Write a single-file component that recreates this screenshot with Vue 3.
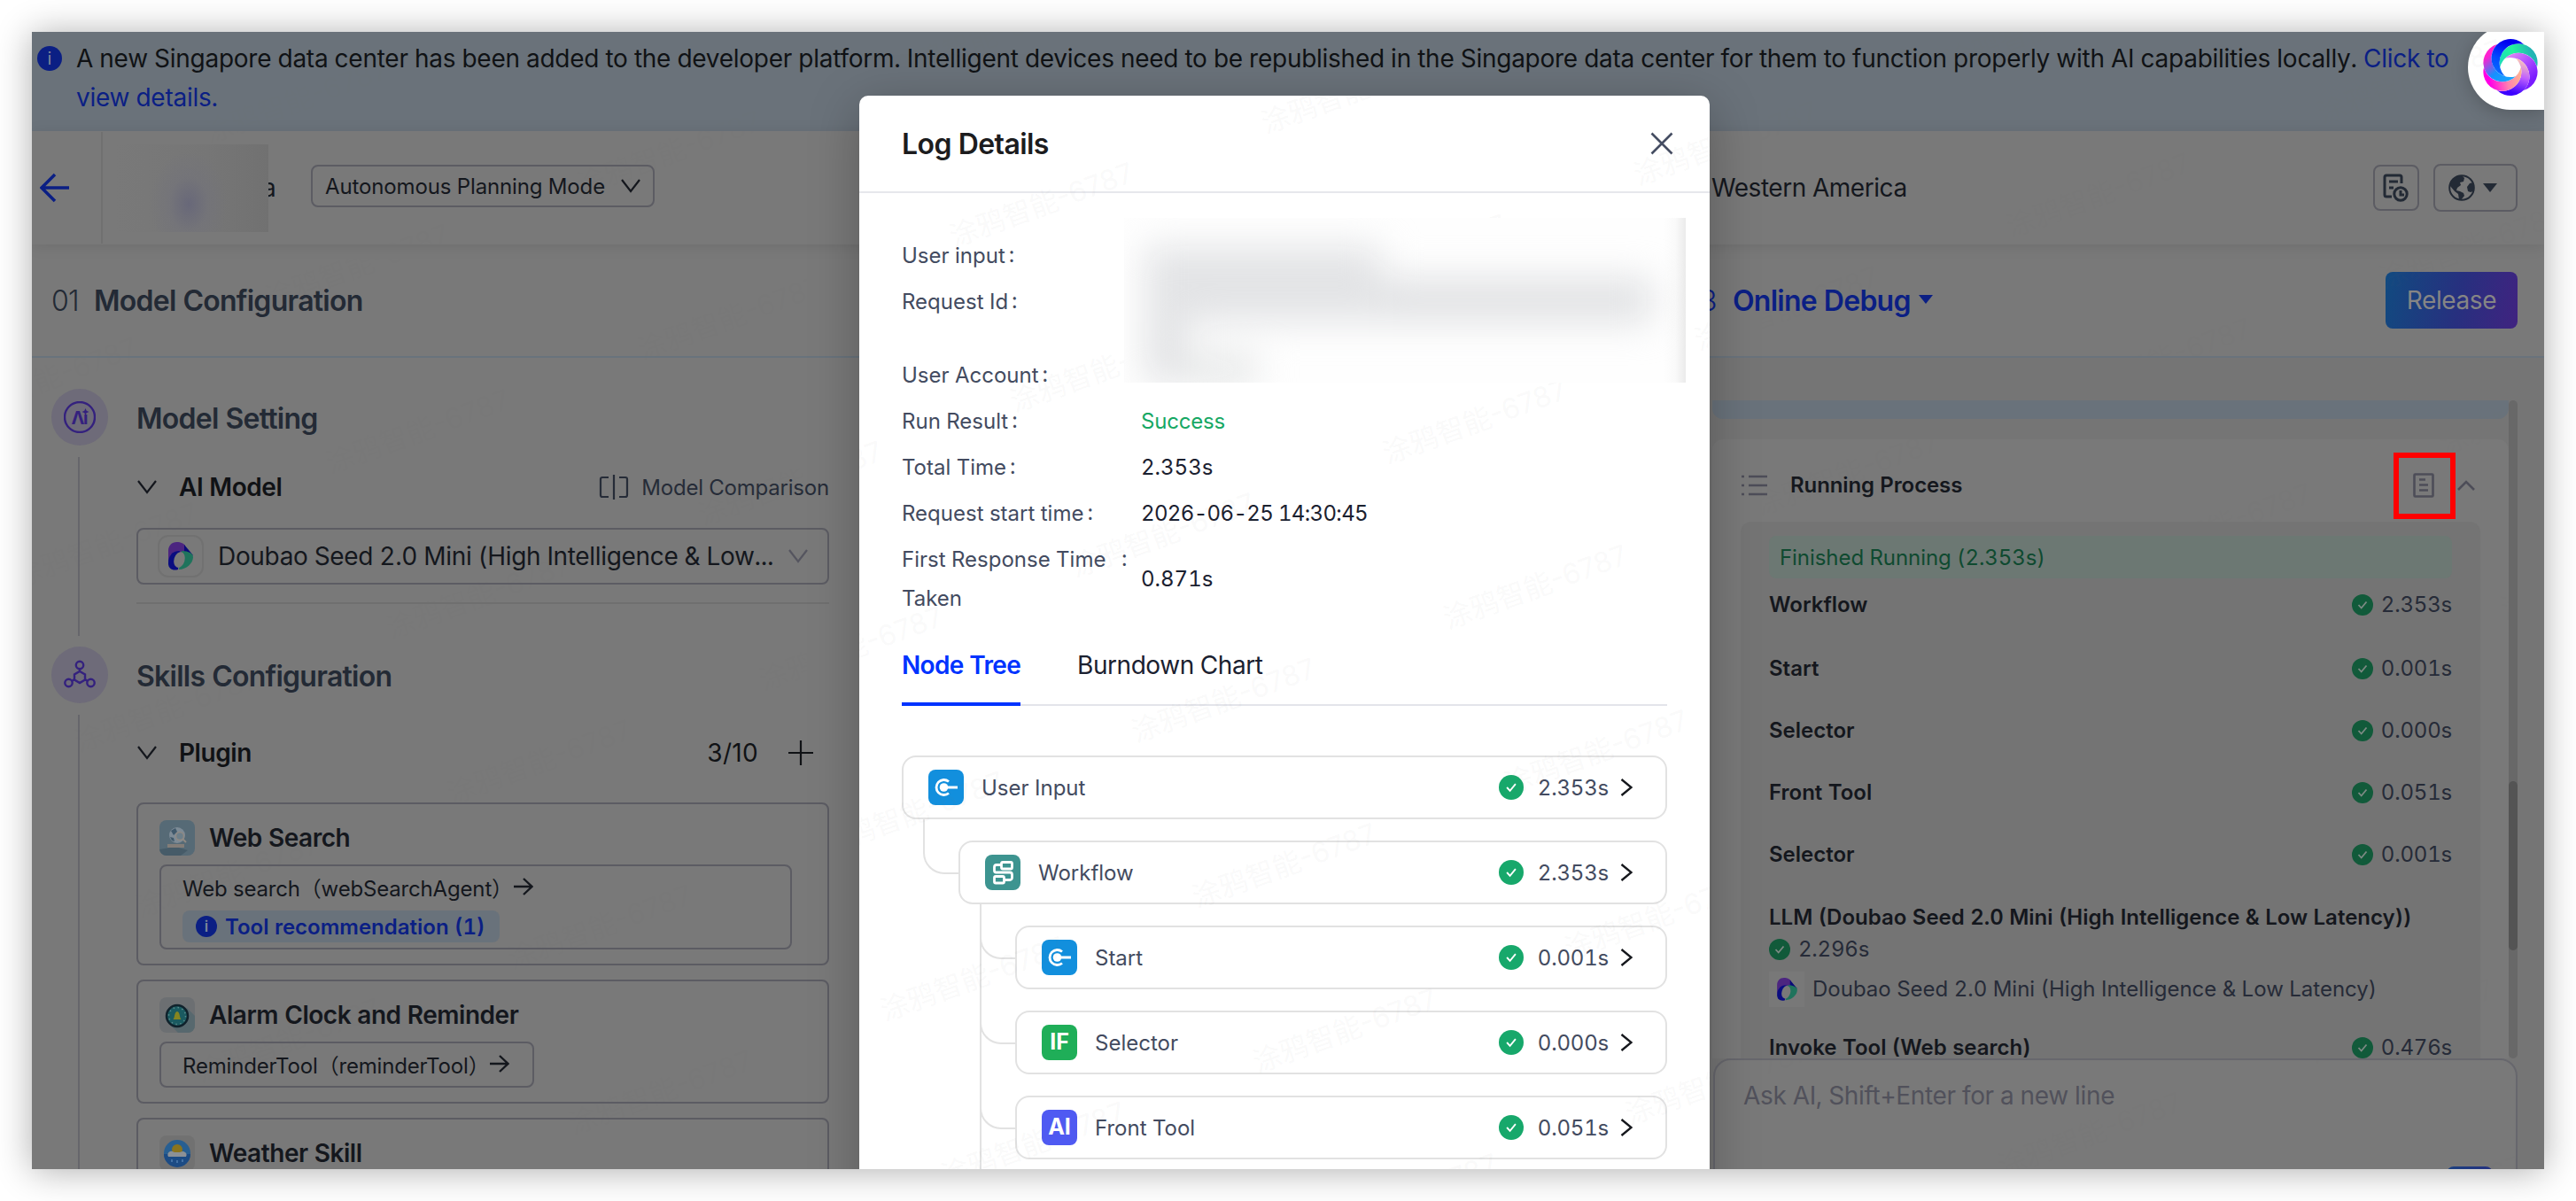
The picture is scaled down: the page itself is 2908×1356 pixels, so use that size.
<template>
  <div class="window">
    <div class="banner">
      <span class="info">i</span>
      <div class="banner-text">
        <p>
          A new Singapore data center has been added to the developer platform. Intelligent devices need to be republished
          in the Singapore data center for them to function properly with AI capabilities locally. <a>Click to</a>
        </p>
        <p><a>view details.</a></p>
      </div>
    </div>

    <header class="header">
      <div class="back">
        <svg width="34" height="34" viewBox="0 0 34 34"><path d="M33 17H3M17 2L2 17l15 15" /></svg>
      </div>
      <div class="agent-name"></div>
      <span class="agent-tail">a</span>
      <div class="mode-select">
        <span>Autonomous Planning Mode</span>
        <svg class="chev" width="22" height="16" viewBox="0 0 22 16"><path d="M1 1l10 13L21 1" /></svg>
      </div>
      <span class="region">Western America</span>
      <div class="tools">
        <div class="tool-btn">
          <svg width="30" height="32" viewBox="0 0 30 32">
            <path d="M10 26H4a2 2 0 0 1-2-2V4a2 2 0 0 1 2-2h15a2 2 0 0 1 2 2v7M7 9h10M7 16h5" />
            <circle cx="20" cy="23" r="7.2" />
            <path d="M20 19v5h4" />
          </svg>
        </div>
        <div class="tool-btn globe">
          <svg width="30" height="30" viewBox="0 0 30 30">
            <circle cx="15" cy="15" r="13.8" />
            <path class="land" d="M2 13C2 6 8 1 16 2l2 2-1 4-4 1 1 3-4 3-1 3 4 1 4 2 1 3-4 5-2-1-1-6-4-3z" />
            <path class="land" d="M28 9l-4 1-3 4 1 5 3 1 3-1 1-5z" />
          </svg>
          <i class="caret"></i>
        </div>
      </div>
    </header>

    <div class="steps">
      <div class="step"><em>01</em><b>Model Configuration</b></div>
      <div class="step active">
        <em>03</em><b>Online Debug</b><i class="caret"></i>
        <button class="release">Release</button>
      </div>
    </div>

    <main class="content">
      <section class="config">
        <div class="group first">
          <div class="rail">
            <div class="badge">
              <svg width="36" height="36" viewBox="0 0 36 36">
                <circle cx="18" cy="18" r="17" />
                <text x="8.5" y="26" font-size="20" textLength="19">Λı</text>
                <path class="fill" d="M24.5 8l1.2 2.8 2.8 1.2-2.8 1.2-1.2 2.8-1.2-2.8-2.8-1.2 2.8-1.2z" />
              </svg>
            </div>
            <i class="line"></i>
          </div>
          <div class="group-body">
            <h2>Model Setting</h2>
            <div class="row-title model-row">
              <svg class="chev" width="22" height="16" viewBox="0 0 22 16"><path d="M1 1l10 13L21 1" /></svg>
              <b>AI Model</b>
              <span class="compare">
                <svg width="34" height="30" viewBox="0 0 34 30">
                  <path d="M11 4H4a2 2 0 0 0-2 2v18a2 2 0 0 0 2 2h7M17 1v28M23 4h7a2 2 0 0 1 2 2v18a2 2 0 0 1-2 2h-7" />
                </svg>
                Model Comparison
              </span>
            </div>
            <div class="model-select">
              <span class="logo-box">
                <svg width="28" height="32" viewBox="0 0 28 32">
                  <path d="M0 24V10C0 4 4 0 9.500 0 14 0 18 2 19 4v10H3z" fill="#4c2580" />
                  <path d="M18 3l10 12-10-3z" fill="#0a0a78" />
                  <path d="M15 10c8 0 13 3 13 7 0 7-8 14-16 14z" fill="#1f735c" />
                  <path d="M0 24c0-8 4-14 13-14l-2 21c-6 2-11-1-11-7z" fill="#0a0d80" />
                  <ellipse cx="12.500" cy="20" rx="6" ry="9" transform="rotate(16 12.500 20)" fill="#797979" />
                </svg>
              </span>
              <span class="model-name">Doubao Seed 2.0 Mini (High Intelligence &amp; Low...</span>
              <svg class="chev dim" width="22" height="16" viewBox="0 0 22 16"><path d="M1 1l10 13L21 1" /></svg>
            </div>
            <hr />
          </div>
        </div>

        <div class="group">
          <div class="rail">
            <div class="badge">
              <svg width="36" height="36" viewBox="0 0 36 36">
                <circle cx="18" cy="7" r="4.2" />
                <circle cx="5.5" cy="27" r="4.2" />
                <circle cx="30.5" cy="27" r="4.2" />
                <path d="M18 11v4M12 23l-3 2M24 23l3 2M18 14l6 3.500v6L18 27l-6-3.500v-6z" />
              </svg>
            </div>
            <i class="line"></i>
          </div>
          <div class="group-body">
            <h2>Skills Configuration</h2>
            <div class="row-title plugin-row">
              <svg class="chev" width="22" height="16" viewBox="0 0 22 16"><path d="M1 1l10 13L21 1" /></svg>
              <b>Plugin</b>
              <span class="count">3/10</span>
              <svg class="plus" width="28" height="28" viewBox="0 0 28 28"><path d="M14 0v28M0 14h28" /></svg>
            </div>
            <div class="cards">
              <div v-for="p in plugins" :key="p.name" class="card">
                <div class="card-title">
                  <svg v-if="p.icon === 'web'" width="40" height="40" viewBox="0 0 40 40">
                    <rect width="40" height="40" rx="8" fill="#566a76" />
                    <path d="M0 33l18-3 14 4-8 6H8a8 8 0 0 1-8-7z" fill="#465b68" />
                    <circle cx="20" cy="17" r="9" fill="#7d8b96" />
                    <path d="M13 12l5-3 2 4-4 4zM12 19l4 1 1 4-3-1z" fill="#40596b" />
                    <circle cx="23" cy="18" r="4.500" fill="#6d7f8a" stroke="#908a84" stroke-width="1.500" />
                    <path d="M26 21l4 4" stroke="#908a84" stroke-width="2" />
                    <rect x="9" y="27" width="19" height="4" fill="#837d78" />
                  </svg>
                  <svg v-else-if="p.icon === 'clock'" width="40" height="40" viewBox="0 0 40 40">
                    <rect width="40" height="40" rx="8" fill="#6c6f72" />
                    <path d="M31 12l9 9v11a8 8 0 0 1-8 8H21l-8-8z" fill="#57686e" />
                    <circle cx="20" cy="21" r="12" fill="#1a5a60" stroke="#10222c" stroke-width="2.500" />
                    <circle cx="20" cy="21" r="9.500" fill="none" stroke="#5a8a8c" stroke-width="1.500" stroke-dasharray="1.500 3.500" />
                    <path d="M15.500 25c2-2 1-8 4.500-9 3.500 1 2.500 7 4.500 9z" fill="#858520" />
                  </svg>
                  <svg v-else width="40" height="40" viewBox="0 0 40 40">
                    <rect width="40" height="40" rx="8" fill="#717171" />
                    <circle cx="20" cy="20" r="15" fill="#285f92" />
                    <path d="M5 21h30a15 15 0 0 1-30 0z" fill="#1c4b84" />
                    <circle cx="20" cy="16" r="6" fill="#8a741e" />
                    <path d="M10 24a4 4 0 0 1 2-6c3-1 4 1 5 1h6c1 0 3-2 6 0a4 4 0 0 1 1 5z" fill="#8c9196" />
                    <path d="M14 27v3M20 28v3M26 27v3" stroke="#4f7fb0" stroke-width="1.500" />
                  </svg>
                  <b>{{ p.name }}</b>
                </div>
                <div v-if="p.tool" class="tool" :class="{ wide: p.tip }">
                  <div class="tool-line">
                    <span>{{ p.tool }}</span>
                    <svg width="22" height="20" viewBox="0 0 22 20"><path d="M0 10h20M11 1l9.500 9L11 19" /></svg>
                  </div>
                  <div v-if="p.tip" class="tip"><span class="info small">i</span>{{ p.tip }}</div>
                </div>
              </div>
            </div>
          </div>
        </div>
      </section>

      <section class="debug">
        <div class="scroller">
          <div class="messages">
            <div class="prev-msg"></div>
            <div class="process">
              <div class="process-head">
                <svg width="30" height="26" viewBox="0 0 30 26">
                  <path d="M0 3h3M8 3h21M0 13h3M8 13h21M0 23h3M8 23h21" />
                </svg>
                <b>Running Process</b>
                <div class="log-icon">
                  <svg width="24" height="28" viewBox="0 0 24 28">
                    <rect x="1.500" y="1.500" width="21" height="25" rx="1" />
                    <path d="M7 7.500h7M7 13.500h10M7 19.500h10" />
                  </svg>
                </div>
                <svg width="20" height="12" viewBox="0 0 20 12"><path d="M1 11l9-9 9 9" /></svg>
              </div>
              <div class="process-body">
                <div class="finished">Finished Running (2.353s)</div>
                <div v-for="(s, i) in steps" :key="i" class="run" :class="{ long: s.model }">
                  <b>{{ s.name }}</b>
                  <span class="cost">
                    <svg width="24" height="24" viewBox="0 0 24 24">
                      <circle cx="12" cy="12" r="12" /><path d="M7.500 12l3.200 3.500 5.800-7" />
                    </svg>
                    {{ s.cost }}
                  </span>
                  <div v-if="s.model" class="run-model">
                    <span class="mini-logo">
                      <svg width="23" height="26" viewBox="0 0 28 32">
                        <path d="M0 24V10C0 4 4 0 9.500 0 14 0 18 2 19 4v10H3z" fill="#4c2580" />
                        <path d="M18 3l10 12-10-3z" fill="#0a0a78" />
                        <path d="M15 10c8 0 13 3 13 7 0 7-8 14-16 14z" fill="#1f735c" />
                        <path d="M0 24c0-8 4-14 13-14l-2 21c-6 2-11-1-11-7z" fill="#0a0d80" />
                        <ellipse cx="12.500" cy="20" rx="6" ry="9" transform="rotate(16 12.500 20)" fill="#797979" />
                      </svg>
                    </span>
                    {{ s.model }}
                  </div>
                </div>
              </div>
            </div>
          </div>
          <div class="scrollbar"><i></i></div>
        </div>
        <div class="ask">
          <span>Ask AI, Shift+Enter for a new line</span>
          <i class="send"></i>
        </div>
      </section>
    </main>

    <div class="modal">
      <div class="modal-head">
        <b>Log Details</b>
        <svg width="26" height="26" viewBox="0 0 26 26"><path d="M1.500 1.500l23 23M24.500 1.500l-23 23" /></svg>
      </div>
      <div class="modal-body">
        <div v-for="f in fields" :key="f.label" class="field" :class="f.cls">
          <span class="label"><span>{{ f.label }}</span><i>:</i></span>
          <span class="value">{{ f.value }}</span>
        </div>
        <div class="tabs">
          <span class="tab on">Node Tree</span>
          <span class="tab">Burndown Chart</span>
        </div>
        <div class="tree">
          <div v-for="(n, i) in nodes" :key="i" class="node" :class="'level-' + n.level">
            <i v-if="n.level" class="elbow"></i>
            <i v-if="n.level === 2" class="trunk"></i>
            <span class="node-icon" :class="n.kind">
              <svg v-if="n.kind === 'start'" width="40" height="40" viewBox="0 0 40 40">
                <path d="M23 13.500a8.500 8.500 0 1 0 0 13M17 20h16" />
                <circle cx="17.500" cy="20" r="4.800" />
              </svg>
              <svg v-else-if="n.kind === 'flow'" width="40" height="40" viewBox="0 0 40 40">
                <rect x="18.500" y="8.500" width="12" height="7.500" rx="1.500" />
                <rect x="10.500" y="24.500" width="11" height="7.500" rx="1.500" />
                <path d="M18 11.500h-5a2.500 2.500 0 0 0-2.500 2.500v4a2 2 0 0 0 2 2h15.500a2.500 2.500 0 0 1 2.500 2.500V26a2.500 2.500 0 0 1-2.500 2.500h-6" />
              </svg>
              <template v-else>{{ n.kind === 'if' ? 'IF' : 'AI' }}</template>
            </span>
            <span class="node-name">{{ n.name }}</span>
            <svg class="ok" width="28" height="28" viewBox="0 0 24 24">
              <circle cx="12" cy="12" r="12" /><path d="M7.800 12l3 3.300 5.400-6.600" />
            </svg>
            <span class="node-cost">{{ n.cost }}</span>
            <svg class="go" width="14" height="20" viewBox="0 0 14 20"><path d="M1.500 1l11 9-11 9" /></svg>
          </div>
          <i class="node level-2 next"><i class="trunk"></i></i>
        </div>
      </div>
    </div>

    <div class="mark-box"></div>

    <div class="assistant">
      <svg width="66" height="66" viewBox="-33 -33 66 66">
        <defs>
          <linearGradient
            v-for="(p, i) in petals"
            :id="'petal' + i"
            :key="i"
            gradientUnits="userSpaceOnUse"
            x1="-12"
            y1="-6"
            x2="26"
            y2="6"
          >
            <stop offset="0" :stop-color="p[0]" />
            <stop offset="0.5" :stop-color="p[1]" />
            <stop offset="1" :stop-color="p[2]" />
          </linearGradient>
        </defs>
        <path
          v-for="(p, i) in petals"
          :key="i"
          :transform="`rotate(${i * 60 - 30})`"
          :fill="`url(#petal${i})`"
          d="M25.930 14.970A21.500 21.500 0 1 0 -10.180 -5.880A21.500 21.500 0 0 1 25.930 14.970z"
        />
      </svg>
    </div>

    <svg class="watermark" width="2836" height="1284" viewBox="36 36 2836 1284">
      <text v-for="(w, i) in watermarks" :key="i" :transform="`translate(${w.x} ${w.y}) rotate(-20)`">涂鸦智能-6787</text>
    </svg>

    <div class="redacted"><i></i></div>
  </div>
</template>

<script setup>
const plugins = [
  { icon: "web", name: "Web Search", tool: "Web search（webSearchAgent）", tip: "Tool recommendation (1)" },
  { icon: "clock", name: "Alarm Clock and Reminder", tool: "ReminderTool（reminderTool）" },
  { icon: "weather", name: "Weather Skill" },
];

const steps = [
  { name: "Workflow", cost: "2.353s" },
  { name: "Start", cost: "0.001s" },
  { name: "Selector", cost: "0.000s" },
  { name: "Front Tool", cost: "0.051s" },
  { name: "Selector", cost: "0.001s" },
  {
    name: "LLM (Doubao Seed 2.0 Mini (High Intelligence & Low Latency))",
    cost: "2.296s",
    model: "Doubao Seed 2.0 Mini (High Intelligence & Low Latency)",
  },
  { name: "Invoke Tool (Web search)", cost: "0.476s" },
];

const fields = [
  { label: "User input", value: "" },
  { label: "Request Id", value: "", cls: "tall" },
  { label: "User Account", value: "" },
  { label: "Run Result", value: "Success", cls: "success" },
  { label: "Total Time", value: "2.353s" },
  { label: "Request start time", value: "2026-06-25 14:30:45", cls: "date" },
  { label: "First Response Time Taken", value: "0.871s", cls: "double" },
];

const nodes = [
  { level: 0, kind: "start", name: "User Input", cost: "2.353s" },
  { level: 1, kind: "flow", name: "Workflow", cost: "2.353s" },
  { level: 2, kind: "start", name: "Start", cost: "0.001s" },
  { level: 2, kind: "if", name: "Selector", cost: "0.000s" },
  { level: 2, kind: "ai", name: "Front Tool", cost: "0.051s" },
];

// start, middle and end colour of each petal, clockwise from the top
const petals = [
  ["#1fd8c0", "#22f59a", "#22b4b4"],
  ["#e58cf5", "#b050ff", "#7a1cff"],
  ["#ffd0b0", "#c060ff", "#3c00ff"],
  ["#ffc08a", "#ff80b0", "#ff00e6"],
  ["#18a8ff", "#1590ff", "#ff20d0"],
  ["#0a70ff", "#0048ff", "#0000f0"],
];

const watermarks = [];
for (let i = -8; i <= 10; i++) {
  for (let j = -4; j <= 6; j++) {
    const x = 1077 + i * 68.500 + j * 352;
    const y = 279 + i * 186.500 - j * 128;
    if (x > -100 && x < 2860 && y > 60 && y < 1400) watermarks.push({ x, y });
  }
}
</script>

<style>
body {
  background: #fff;
}
</style>

<style scoped>
.window {
  position: relative;
  width: 2836px;
  height: 1284px;
  margin: 36px;
  overflow: hidden;
  background: #797979;
  box-shadow: 0 2px 38px rgba(0, 0, 0, 0.32);
  font-family: Inter, "Noto Sans CJK SC", sans-serif;
  font-size: 24px;
  font-variant-numeric: tabular-nums;
  color: #14171d;
  white-space: nowrap;
}

.window * {
  box-sizing: border-box;
}

svg {
  flex: none;
  display: block;
  fill: none;
}

b,
h2 {
  font-weight: 560;
}

i,
em {
  font-style: normal;
}

/* banner */
.banner {
  display: flex;
  height: 112px;
  padding: 8px 6px;
  background: #6a727a;
  font-size: 28px;
  letter-spacing: -0.26px;
  line-height: 45px;
  color: #101215;
}

.banner p {
  height: 44px;
  margin: 0;
}

.banner a {
  color: #0b1f84;
}

.info {
  flex: none;
  width: 28px;
  height: 28px;
  margin: 8px 16px 0 0;
  border-radius: 50%;
  background: #0b1f84;
  color: #7c8498;
  font-size: 20px;
  letter-spacing: 0;
  line-height: 28px;
  text-align: center;
}

.info.small {
  width: 24px;
  height: 24px;
  margin: 0 9px 0 0;
  font-size: 17px;
  line-height: 24px;
}

/* header */
.header {
  position: relative;
  display: flex;
  align-items: center;
  height: 128px;
  background: #797979;
  box-shadow: 0 2px 16px rgba(0, 0, 0, 0.09);
}

.back {
  display: flex;
  align-items: center;
  width: 80px;
  height: 126px;
  padding-left: 9px;
  border-right: 2px solid #707070;
}

.back svg {
  stroke: #0b1f84;
  stroke-width: 3.5;
}

.agent-name {
  position: relative;
  z-index: 1;
  width: 173px;
  height: 99px;
  margin: 0 0 0 14px;
  background: radial-gradient(ellipse 44px 60px at 48% 68%, #686879, rgba(112, 112, 124, 0.4) 50%, transparent),
    linear-gradient(90deg, #797979, #767676 60%, #717171);
}

.agent-tail {
  width: 55px;
  margin-left: -7px;
  font-size: 28px;
}

.mode-select {
  display: flex;
  align-items: center;
  justify-content: space-between;
  width: 388px;
  height: 48px;
  padding: 0 14px;
  margin-top: -4px;
  border: 2px solid #5c5c63;
  border-radius: 8px;
  letter-spacing: -0.12px;
}

.chev {
  stroke: #14171d;
  stroke-width: 2.2;
}

.chev.dim {
  stroke: #55555f;
}

.region {
  margin-left: 1193px;
  font-size: 28px;
  letter-spacing: -0.45px;
}

.tools {
  display: flex;
  align-items: center;
  gap: 16px;
  margin: 0 30px 0 auto;
}

.tool-btn {
  display: flex;
  align-items: center;
  justify-content: center;
  width: 52px;
  height: 52px;
  border: 2px solid #5c5c63;
  border-radius: 8px;
}

.tool-btn svg {
  stroke: #232a35;
  stroke-width: 3;
}

.tool-btn.globe {
  justify-content: flex-start;
  gap: 9px;
  width: 95px;
  height: 54px;
  padding-left: 15px;
}

.globe svg {
  stroke-width: 2;
}

.land {
  fill: #232a35;
  stroke: none;
}

.caret {
  border: 8px solid transparent;
  border-top: 10px solid #232a35;
  border-bottom: 0;
}

/* step titles */
.steps {
  display: grid;
  grid-template-columns: 1860px 1fr;
  height: 128px;
  border-bottom: 2px solid #69737c;
}

.step {
  display: flex;
  align-items: center;
  padding-left: 22px;
  font-size: 32px;
  letter-spacing: -0.74px;
  color: #232a35;
}

.step em {
  width: 48px;
  font-weight: 300;
  font-variant-numeric: normal;
}

.step.active {
  padding: 0 30px 0 0;
  color: #0b1f84;
}

.step.active em {
  width: 60px;
  padding-left: 4px;
}

.step .caret {
  margin: -2px 0 0 9px;
  border-top-color: #0b1f84;
}

.release {
  width: 149px;
  height: 64px;
  margin-left: auto;
  padding: 0;
  border: 0;
  border-radius: 8px;
  background: linear-gradient(100deg, #114a80, #27307f 55%, #402380);
  color: #858585;
  font: 28px Inter, sans-serif;
  letter-spacing: -0.4px;
}

.content {
  display: grid;
  grid-template-columns: 1894px 1fr;
  height: 916px;
}

/* left: agent configuration */
.config {
  width: 900px;
  padding: 35px 0 0 22px;
}

.group {
  display: flex;
  gap: 32px;
  height: 620px;
}

.group.first {
  height: 291px;
}

.group-body {
  flex: 1;
}

.rail {
  display: flex;
  flex-direction: column;
  width: 64px;
}

.badge {
  display: flex;
  align-items: center;
  justify-content: center;
  flex: none;
  height: 64px;
  border-radius: 50%;
  background: #6e6b79;
}

.badge svg {
  stroke: #34217e;
  stroke-width: 2.4;
}

.badge text {
  fill: #34217e;
  stroke: none;
  font-weight: 700;
}

.badge .fill {
  fill: #34217e;
  stroke: none;
}

.rail .line {
  flex: 1;
  width: 2px;
  margin: 13px 0 12px 30px;
  background: #66666b;
}

h2 {
  margin: 0;
  font-size: 32px;
  letter-spacing: -0.74px;
  line-height: 67px;
  height: 64px;
  color: #232a35;
}

.row-title {
  display: flex;
  align-items: center;
  height: 40px;
  padding-left: 1px;
  font-size: 28px;
  letter-spacing: -0.45px;
  color: #101215;
}

.row-title b {
  margin: 0 auto 0 25px;
}

.model-row {
  margin: 27px 0 26px;
}

.compare {
  display: flex;
  align-items: center;
  gap: 14px;
  font-size: 24px;
  letter-spacing: -0.2px;
  color: #262c38;
}

.compare svg {
  stroke: #262c38;
  stroke-width: 2.2;
}

.model-select {
  display: flex;
  align-items: center;
  height: 64px;
  padding: 0 22px;
  border: 2px solid #5c5c63;
  border-radius: 8px;
  font-size: 28px;
  letter-spacing: -0.33px;
}

.logo-box {
  display: flex;
  align-items: center;
  justify-content: center;
  width: 52px;
  height: 48px;
  margin-right: 16px;
  border: 2px solid #717171;
  border-radius: 12px;
}

.model-name {
  flex: 1;
}

hr {
  height: 2px;
  margin: 20px 0 0;
  border: 0;
  background: #6f6f6f;
}

.plugin-row {
  margin: 36px 0;
  padding-right: 18px;
}

.count {
  font-variant-numeric: normal;
  letter-spacing: 0.3px;
}

.plus {
  margin-left: 34px;
  stroke: #101215;
  stroke-width: 2.2;
}

.cards {
  display: flex;
  flex-direction: column;
  gap: 16px;
}

.card {
  padding: 18px 24px 16px;
  border: 2px solid #5c5c63;
  border-radius: 8px;
}

.card-title {
  display: flex;
  align-items: center;
  gap: 16px;
  height: 40px;
  font-size: 28px;
  letter-spacing: -0.45px;
}

.tool {
  display: inline-block;
  width: 423px;
  margin-top: 10px;
  padding: 6px 24px;
  border: 2px solid #5c5c63;
  border-radius: 8px;
  letter-spacing: -0.17px;
  vertical-align: top;
}

.tool.wide {
  width: 714px;
}

.tool-line {
  display: flex;
  align-items: center;
  gap: 1px;
  height: 36px;
  padding-bottom: 2px;
}

.tool-line svg {
  stroke: #14171d;
  stroke-width: 2.4;
}

.tip {
  display: inline-flex;
  align-items: center;
  height: 36px;
  margin-top: 8px;
  padding: 0 17px 0 15px;
  border-radius: 8px;
  background: #69727b;
  color: #0b1f84;
  font-weight: 560;
  letter-spacing: 0;
  vertical-align: top;
}

/* right: debug panel */
.debug {
  display: flex;
  flex-direction: column;
  padding: 48px 30px 0 3px;
  background: #757575;
}

.scroller {
  display: flex;
  height: 743px;
}

.messages {
  flex: 1;
  overflow: hidden;
}

.prev-msg {
  height: 21px;
  border-radius: 0 0 12px 12px;
  background: #69727b;
}

.process {
  margin-top: 23px;
  padding: 0 32px;
  border-radius: 12px;
  background: #797979;
}

.process-head {
  display: flex;
  align-items: center;
  height: 93px;
  padding: 10px 6px 0 1px;
}

.process-head svg {
  stroke: #4d4d58;
  stroke-width: 2.6;
}

.process-head b {
  margin: 0 auto 0 25px;
  letter-spacing: -0.1px;
}

.log-icon {
  margin-right: 26px;
}

.process-body {
  height: 640px;
  padding: 16px 32px;
  border-radius: 12px;
  background: #747474;
}

.finished {
  height: 48px;
  margin-bottom: 14px;
  padding-left: 12px;
  border-radius: 8px;
  background: #6c7873;
  color: #0f4a30;
  letter-spacing: -0.06px;
  line-height: 49px;
}

.run {
  display: flex;
  align-items: center;
  justify-content: space-between;
  height: 32px;
  margin-bottom: 38px;
  line-height: 34px;
}

.finished + .run {
  margin-bottom: 40px;
}

.cost {
  display: flex;
  align-items: center;
  gap: 9px;
  color: #262b38;
  letter-spacing: -0.2px;
}

.cost circle {
  fill: #115a3a;
}

.cost path {
  stroke: #7d8a84;
  stroke-width: 1.8;
}

.run.long {
  flex-direction: column;
  align-items: flex-start;
  height: 118px;
  margin-bottom: 30px;
}

.run.long b {
  height: 32px;
}

.run.long .cost {
  height: 32px;
  margin-bottom: 4px;
}

.run-model {
  display: flex;
  align-items: center;
  gap: 9px;
  color: #262b38;
}

.mini-logo {
  display: flex;
  align-items: center;
  justify-content: center;
  width: 40px;
  height: 40px;
  background: #787878;
}

.scrollbar {
  width: 10px;
  padding-top: 430px;
  border-radius: 5px;
  background: #686868;
}

.scrollbar i {
  display: block;
  height: 191px;
  border-radius: 5px;
  background: #545454;
}

.ask {
  display: flex;
  justify-content: space-between;
  height: 190px;
  margin-left: 1px;
  padding: 23px 26px 0 32px;
  border: 2px solid #67676d;
  border-radius: 20px;
  background: #797979;
  font-size: 28px;
  letter-spacing: -0.33px;
  line-height: 34px;
  color: #51515b;
}

.send {
  width: 52px;
  height: 52px;
  margin-top: 97px;
  border-radius: 8px;
  background: linear-gradient(90deg, #1b4080, #243080);
}

/* dialog */
.modal {
  position: absolute;
  top: 72px;
  left: 934px;
  width: 960px;
  height: 1300px;
  border-radius: 10px;
  background: #fff;
  box-shadow: 0 12px 56px rgba(0, 0, 0, 0.26);
}

.modal-head {
  display: flex;
  align-items: center;
  justify-content: space-between;
  height: 110px;
  padding: 0 41px 0 48px;
  border-bottom: 2px solid #e6e7ec;
  font-size: 32px;
  letter-spacing: -0.6px;
  color: #1c1c1e;
}

.modal-head svg {
  stroke: #454d62;
  stroke-width: 2.6;
}

.modal-body {
  padding: 49px 48px 0;
}

.field {
  display: flex;
  align-items: center;
  min-height: 44px;
  margin-bottom: 8px;
  line-height: 44px;
  color: #1b2130;
}

.field.tall {
  align-items: flex-start;
  height: 75px;
}

.label {
  display: flex;
  width: 270px;
  color: #434b60;
}

.label i {
  margin: -1px 0 0 4px;
}

.field.double {
  margin-bottom: 7px;
}

.field.double .label > span {
  width: 244px;
  white-space: normal;
}

.success .value {
  color: #17a864;
  letter-spacing: -0.2px;
}

.date .value {
  letter-spacing: -0.65px;
}

.tabs {
  display: flex;
  gap: 64px;
  height: 92px;
  border-bottom: 2px solid #e3e4ea;
  font-size: 28px;
  letter-spacing: -0.45px;
  line-height: 92px;
  color: #1b2130;
}

.tab.on {
  height: 92px;
  border-bottom: 4px solid #0033ff;
  color: #0033ff;
  font-weight: 560;
  letter-spacing: -0.7px;
}

.tree {
  display: flex;
  flex-direction: column;
  gap: 24px;
  padding-top: 56px;
}

.node {
  position: relative;
  display: flex;
  align-items: center;
  height: 72px;
  padding: 0 37px 0 28px;
  border: 2px solid #e2e2e2;
  border-radius: 16px;
}

.level-1 {
  margin-left: 64px;
}

.level-2 {
  margin-left: 128px;
}

/* connector lines hang off the left edge of each child */
.elbow {
  position: absolute;
  top: -26px;
  left: -42px;
  width: 41px;
  height: 62px;
  border: solid #e2e2e2;
  border-width: 0 0 2px 2px;
  border-bottom-left-radius: 24px;
}

.trunk {
  position: absolute;
  top: -26px;
  left: -42px;
  width: 2px;
  height: 96px;
  background: #e2e2e2;
}

.level-1 + .level-2 .trunk {
  top: -26px;
}

.node-icon {
  width: 40px;
  height: 40px;
  border-radius: 8px;
  color: #fff;
  font-size: 25px;
  font-weight: 700;
  line-height: 39px;
  text-align: center;
}

.node-icon svg {
  stroke: #fff;
  stroke-width: 2.8;
}

.start {
  background: #128fdd;
}

.start circle {
  fill: #fff;
  stroke: none;
}

.flow {
  background: #3d9490;
}

.if {
  background: #1fae58;
}

.ai {
  background: #4f5af2;
}

.node-name {
  margin: 0 auto 0 20px;
  color: #434b60;
}

.ok circle {
  fill: #17a86b;
}

.ok path {
  stroke: #fff;
  stroke-width: 1.6;
}

.node-cost {
  margin: 0 13px 0 16px;
  color: #434b60;
  letter-spacing: -0.2px;
}

.go {
  stroke: #16181d;
  stroke-width: 2.4;
}

/* last item only carries the trunk further down */
.next {
  height: 0;
  padding: 0;
  border-width: 2px 0 0;
  border-color: transparent;
}

.next .trunk {
  left: -40px;
}

.redacted {
  position: absolute;
  top: 210px;
  left: 1233px;
  width: 634px;
  height: 186px;
  overflow: hidden;
  background: linear-gradient(270deg, #ebebeb, #fafafa 12px, rgba(255, 255, 255, 0) 26px), #fefefe;
}

.redacted i {
  position: absolute;
  inset: 0;
  background: linear-gradient(#e3e4e6, #e3e4e6) 24px 32px / 266px 86px no-repeat,
    linear-gradient(#e1e2e4, #e1e2e4) 24px 68px / 572px 50px no-repeat,
    linear-gradient(#e2e3e5, #e2e3e5) 24px 80px / 48px 110px no-repeat,
    linear-gradient(#e2e4e4, #e2e4e4) 24px 156px / 126px 60px no-repeat;
  filter: blur(20px);
}

/* annotation over the log button */
.mark-box {
  position: absolute;
  top: 475px;
  left: 2666px;
  width: 70px;
  height: 75px;
  border: 6px solid #f00;
}

.assistant {
  position: absolute;
  top: -8px;
  left: 2750px;
  width: 86px;
  height: 96px;
  padding: 15px 0 0 15px;
  border-radius: 48px 0 0 48px;
  background: #fff;
  box-shadow: 0 4px 20px rgba(0, 0, 0, 0.2);
}

.watermark {
  position: absolute;
  top: 0;
  left: 0;
}

.watermark text {
  fill: rgba(120, 120, 120, 0.055);
  font-size: 32px;
  font-variant-numeric: normal;
}
</style>
